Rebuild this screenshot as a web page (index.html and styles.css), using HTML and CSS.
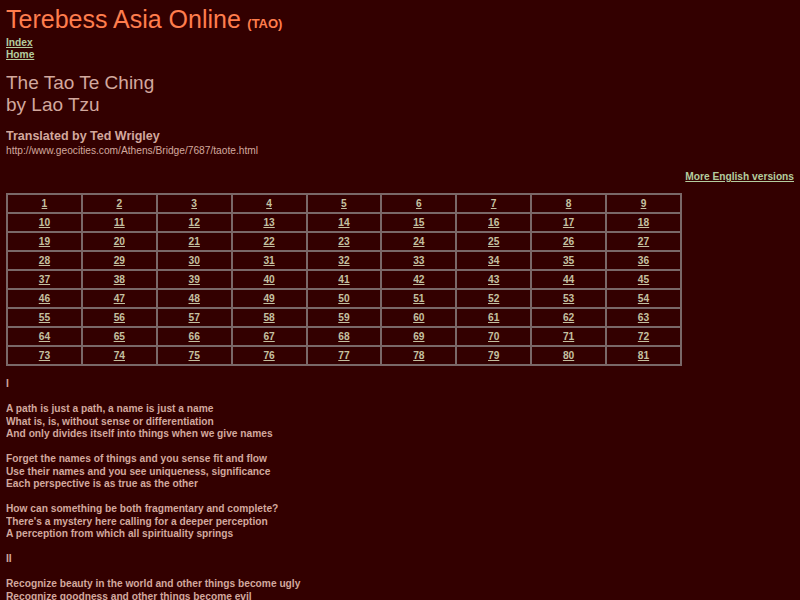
FILE: index.html
```html
<!DOCTYPE html>
<html>
<head>
<meta charset="utf-8">
<title>Tao Te Ching</title>
<link rel="stylesheet" href="styles.css">
</head>
<body>
<div class="site"><span class="site-name">Terebess Asia Online</span> <span class="site-abbr">(TAO)</span></div>
<div class="nav">
<a href="#">Index</a><br>
<a href="#">Home</a>
</div>
<div class="book">The Tao Te Ching<br>by Lao Tzu</div>
<div class="trans">Translated by Ted Wrigley</div>
<div class="url">http://www.geocities.com/Athens/Bridge/7687/taote.html</div>
<div class="more"><a href="#">More English versions</a></div>
<table class="chapters">
<tr><td><a href="#">1</a></td><td><a href="#">2</a></td><td><a href="#">3</a></td><td><a href="#">4</a></td><td><a href="#">5</a></td><td><a href="#">6</a></td><td><a href="#">7</a></td><td><a href="#">8</a></td><td><a href="#">9</a></td></tr>
<tr><td><a href="#">10</a></td><td><a href="#">11</a></td><td><a href="#">12</a></td><td><a href="#">13</a></td><td><a href="#">14</a></td><td><a href="#">15</a></td><td><a href="#">16</a></td><td><a href="#">17</a></td><td><a href="#">18</a></td></tr>
<tr><td><a href="#">19</a></td><td><a href="#">20</a></td><td><a href="#">21</a></td><td><a href="#">22</a></td><td><a href="#">23</a></td><td><a href="#">24</a></td><td><a href="#">25</a></td><td><a href="#">26</a></td><td><a href="#">27</a></td></tr>
<tr><td><a href="#">28</a></td><td><a href="#">29</a></td><td><a href="#">30</a></td><td><a href="#">31</a></td><td><a href="#">32</a></td><td><a href="#">33</a></td><td><a href="#">34</a></td><td><a href="#">35</a></td><td><a href="#">36</a></td></tr>
<tr><td><a href="#">37</a></td><td><a href="#">38</a></td><td><a href="#">39</a></td><td><a href="#">40</a></td><td><a href="#">41</a></td><td><a href="#">42</a></td><td><a href="#">43</a></td><td><a href="#">44</a></td><td><a href="#">45</a></td></tr>
<tr><td><a href="#">46</a></td><td><a href="#">47</a></td><td><a href="#">48</a></td><td><a href="#">49</a></td><td><a href="#">50</a></td><td><a href="#">51</a></td><td><a href="#">52</a></td><td><a href="#">53</a></td><td><a href="#">54</a></td></tr>
<tr><td><a href="#">55</a></td><td><a href="#">56</a></td><td><a href="#">57</a></td><td><a href="#">58</a></td><td><a href="#">59</a></td><td><a href="#">60</a></td><td><a href="#">61</a></td><td><a href="#">62</a></td><td><a href="#">63</a></td></tr>
<tr><td><a href="#">64</a></td><td><a href="#">65</a></td><td><a href="#">66</a></td><td><a href="#">67</a></td><td><a href="#">68</a></td><td><a href="#">69</a></td><td><a href="#">70</a></td><td><a href="#">71</a></td><td><a href="#">72</a></td></tr>
<tr><td><a href="#">73</a></td><td><a href="#">74</a></td><td><a href="#">75</a></td><td><a href="#">76</a></td><td><a href="#">77</a></td><td><a href="#">78</a></td><td><a href="#">79</a></td><td><a href="#">80</a></td><td><a href="#">81</a></td></tr>
</table>
<div class="text">
<p>I</p>
<p>A path is just a path, a name is just a name<br>
What is, is, without sense or differentiation<br>
And only divides itself into things when we give names</p>
<p>Forget the names of things and you sense fit and flow<br>
Use their names and you see uniqueness, significance<br>
Each perspective is as true as the other</p>
<p>How can something be both fragmentary and complete?<br>
There's a mystery here calling for a deeper perception<br>
A perception from which all spirituality springs</p>
<p>II</p>
<p>Recognize beauty in the world and other things become ugly<br>
Recognize goodness and other things become evil<br>
Is and isn't produce each other</p>
</div>
</body>
</html>
```

FILE: styles.css
```css
html, body {
  background: #330000;
}
body {
  margin: 6px;
  font-family: "Liberation Sans", Arial, sans-serif;
  color: #d2a89e;
}
a {
  color: #b4cc9e;
  font-weight: bold;
}
.site {
  color: #ff7d4d;
  line-height: 27px;
}
.site-name {
  font-size: 25px;
}
.site-abbr {
  font-size: 13px;
  font-weight: bold;
  margin-left: 2px;
}
.nav {
  font-size: 10.2px;
  line-height: 12px;
}
.book {
  font-size: 19px;
  line-height: 22px;
  margin-top: 11px;
}
.trans {
  font-size: 12.5px;
  font-weight: bold;
  margin-top: 13px;
  line-height: 15px;
}
.url {
  font-size: 10.2px;
  line-height: 14px;
}
.more {
  text-align: right;
  font-size: 10.2px;
  margin-top: 13px;
  line-height: 12px;
}
.chapters {
  margin-top: 10px;
  border-collapse: collapse;
  border: 2px solid #7a6868;
  width: 676px;
}
.chapters td {
  border: 2px solid #7a6868;
  text-align: center;
  font-size: 10.2px;
  height: 15px;
  padding: 1px 0;
  width: 75px;
}
.chapters a {
  color: #c4c0a0;
}
.text {
  font-size: 10.2px;
  font-weight: bold;
  line-height: 12.5px;
  margin-top: 12px;
}
.text p {
  margin: 0 0 12.5px 0;
}
```
